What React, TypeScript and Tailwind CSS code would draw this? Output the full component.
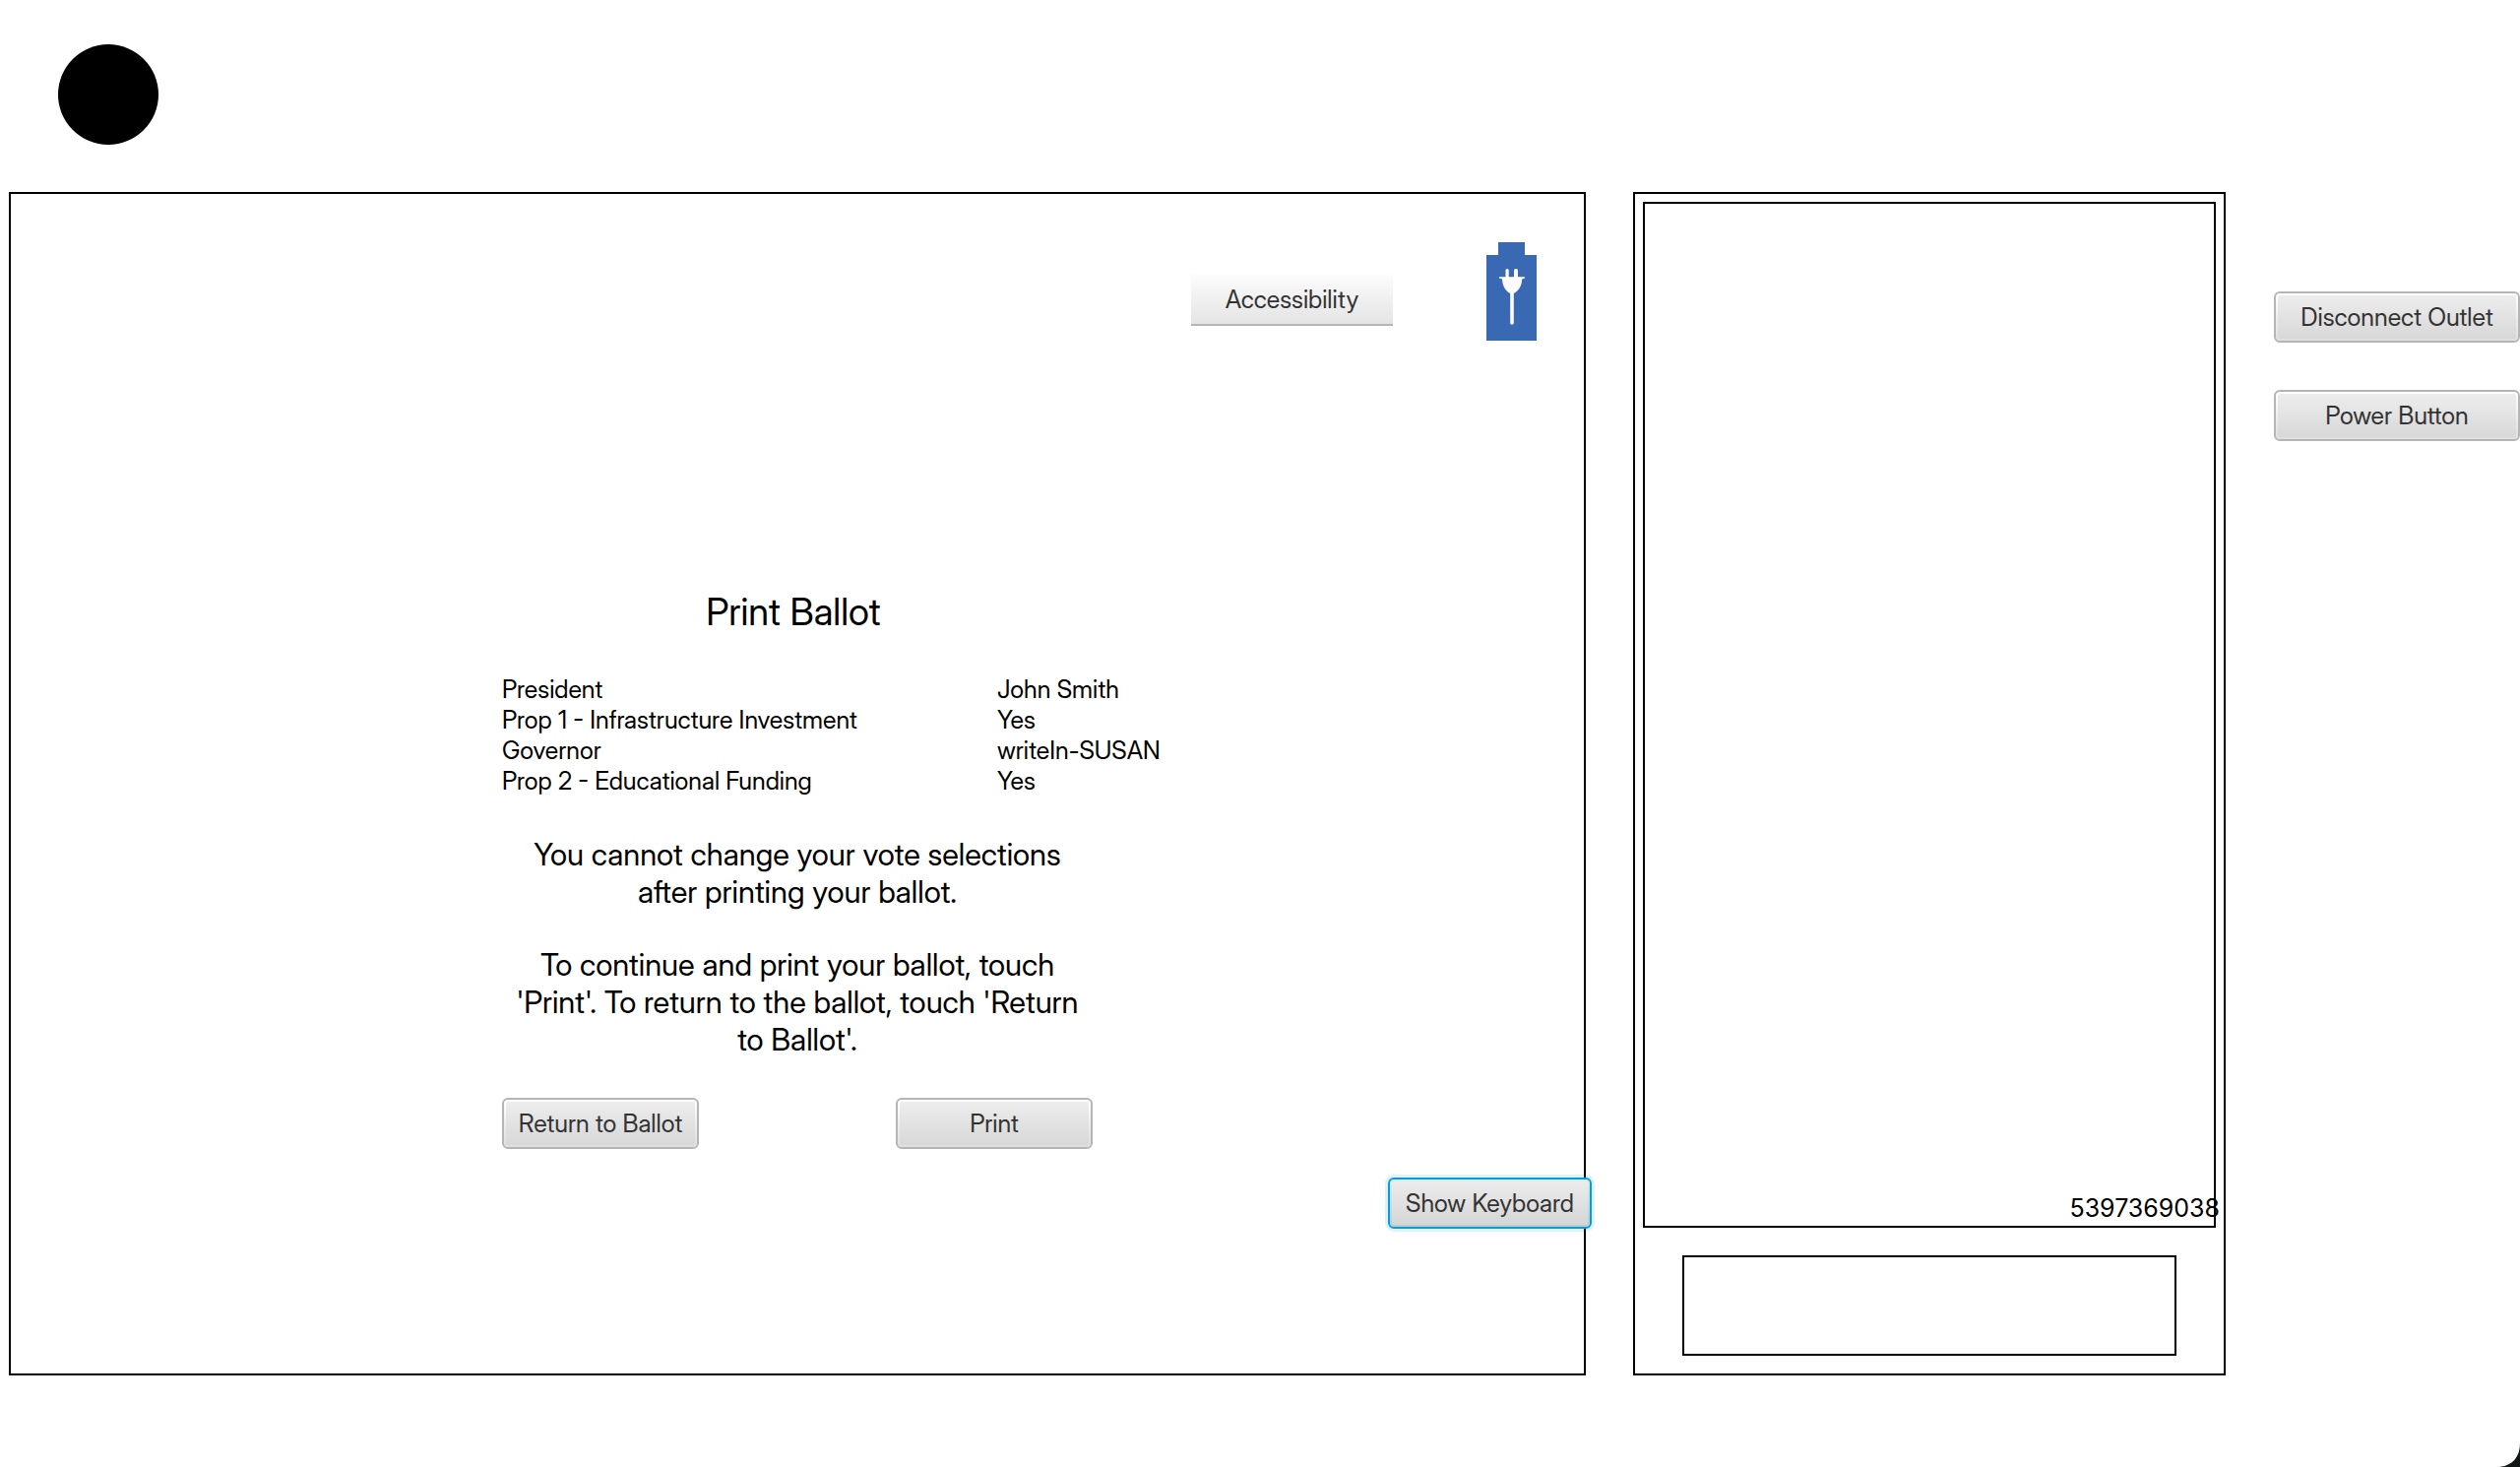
import type { ButtonHTMLAttributes } from "react";
import clsx from "clsx";

const selections = [
  { contest: "President", choice: "John Smith" },
  { contest: "Prop 1 - Infrastructure Investment", choice: "Yes" },
  { contest: "Governor", choice: "writeIn-SUSAN" },
  { contest: "Prop 2 - Educational Funding", choice: "Yes" },
];

function BevelButton({ className, focused = false, ...rest }: ButtonHTMLAttributes<HTMLButtonElement> & { focused?: boolean }) {
  return (
    <button
      type="button"
      className={clsx(
        "flex h-[52px] items-center justify-center whitespace-nowrap rounded-md border-2 p-[2px] text-[25px] leading-[31px] text-[#333333]",
        focused
          ? "border-[#039ed3] shadow-[0_0_0_3px_rgba(3,158,211,0.13)] [background:linear-gradient(#ececec,#d6d6d6)_content-box,linear-gradient(#d9edf6,#b9ccd4)_padding-box]"
          : "border-[#b5b5b5] [background:linear-gradient(#ededed,#d8d8d8)_content-box,linear-gradient(#ffffff,#dfdfdf)_padding-box]",
        className,
      )}
      {...rest}
    />
  );
}

function PluggedBattery() {
  return (
    <svg width="51" height="100" viewBox="0 0 51 100" role="img" aria-label="Battery charging" className="shrink-0">
      <path d="M12 0H39V13H51V100H0V13H12Z" fill="#3a69b3" />
      <g fill="#fff">
        <rect x="19.5" y="27" width="3.2" height="10" rx="1.6" />
        <rect x="28" y="27" width="4" height="10" rx="1.8" />
        <path d="M13 35.2H39V36.4L36.2 37.4C36 44 33 49 27.8 52V82A1.8 1.8 0 0 1 24.2 82V52C19 49 16.4 44 16 37.4L13 36.4Z" />
      </g>
    </svg>
  );
}

export default function App() {
  return (
    <div className="relative min-h-screen bg-white font-['Inter_Display','Inter',sans-serif] text-black">
      <header className="pt-[45px] pb-12 pl-[59px]">
        <div className="size-[102px] rounded-full bg-black" />
      </header>

      <div className="flex items-stretch pl-[9px]">
        <main className="relative flex-1 border-2 border-black pt-[49px] pb-57">
          <div className="flex justify-end gap-[95px] pr-12">
            <button
              type="button"
              className="mt-8 h-[53px] w-[205px] border-b-2 border-[#b5b5b5] bg-linear-to-b from-[#fdfdfd] to-[#e4e4e4] pt-0.5 text-[25px] leading-[31px] text-[#333333]"
            >
              Accessibility
            </button>
            <PluggedBattery />
          </div>

          <section className="mx-auto mt-63 flex w-[600px] flex-col gap-10">
            <h1 className="pr-2 text-center text-[38px] leading-[47px]">Print Ballot</h1>

            <table className="w-full text-left text-[25px] leading-[31px] whitespace-nowrap">
              <tbody>
                {selections.map(({ contest, choice }) => (
                  <tr key={contest}>
                    <th scope="row" className="w-[503px] min-w-[503px] p-0 font-normal">
                      {contest}
                    </th>
                    <td className="p-0">{choice}</td>
                  </tr>
                ))}
              </tbody>
            </table>

            <div className="flex flex-col gap-9 px-2 text-center text-[31px] leading-[38px]">
              <p>You cannot change your vote selections after printing your ballot.</p>
              <p>To continue and print your ballot, touch 'Print'. To return to the ballot, touch 'Return to Ballot'.</p>
            </div>

            <div className="flex justify-between">
              <BevelButton className="w-[200px]">Return to Ballot</BevelButton>
              <BevelButton className="w-[200px]">Print</BevelButton>
            </div>
          </section>

          <BevelButton focused className="absolute -right-2 bottom-[147px] w-[207px]">
            Show Keyboard
          </BevelButton>
        </main>

        <section aria-label="Printer" className="ml-12 flex w-[602px] flex-col gap-7 border-2 border-black px-2 pt-2 pb-[18px]">
          <div className="relative flex-1 border-2 border-black">
            <span className="absolute -right-[6px] bottom-0.5 font-['Inter',sans-serif] text-[25px] leading-[31px]">5397369038</span>
          </div>
          <div className="mx-10 h-[102px] border-2 border-black" />
        </section>

        <aside className="ml-[49px] flex w-[250px] flex-col gap-12 pt-[101px]">
          <BevelButton>Disconnect Outlet</BevelButton>
          <BevelButton>Power Button</BevelButton>
        </aside>
      </div>

      <svg width="24" height="24" viewBox="0 0 24 24" aria-hidden="true" className="absolute right-0 bottom-0">
        <path d="M24 0V24H0C15 24 24 15 24 0Z" fill="#101716" />
      </svg>
    </div>
  );
}
